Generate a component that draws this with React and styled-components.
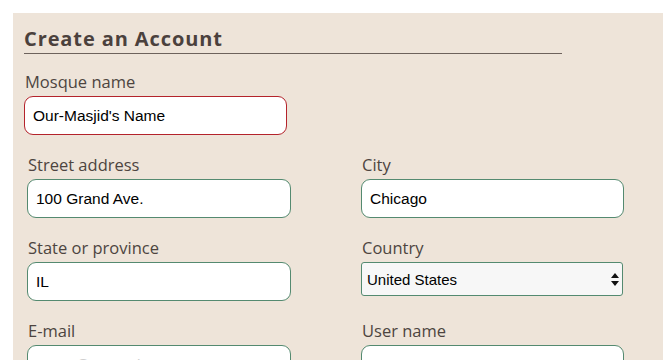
import React from 'react'
import styled, { createGlobalStyle } from 'styled-components'

const GlobalStyle = createGlobalStyle`
  html, body {
    margin: 0;
    background: #ffffff;
  }
  body {
    padding: 13px 0 0 13px;
    overflow: hidden;
  }
`

const Panel = styled.div`
  background: #eee4d9;
  padding: 14px 11px 40px 11px;
  min-height: 400px;
`

const Title = styled.h2`
  margin: 0;
  width: 538px;
  padding-bottom: 2px;
  border-bottom: 1px solid #6d625c;
  font-family: 'Open Sans', sans-serif;
  font-weight: 700;
  font-size: 20px;
  line-height: 24px;
  color: #4b413d;
  letter-spacing: 0.9px;
`

const Field = styled.div`
  display: flex;
  flex-direction: column;
  width: ${p => p.width || 264}px;
  margin-top: ${p => p.top || 0}px;
`

const Label = styled.label`
  font-family: 'Open Sans', sans-serif;
  font-size: 16.5px;
  line-height: 22px;
  color: #4d4440;
  padding-left: 1px;
  margin-bottom: 3px;
`

const Input = styled.input`
  box-sizing: border-box;
  width: 100%;
  height: 39px;
  padding: 0 8px;
  border: 1.5px solid ${p => (p.invalid ? '#b4232b' : '#548a70')};
  border-radius: 9px;
  background: #ffffff;
  font-family: 'Liberation Sans', Arial, sans-serif;
  font-size: 15.5px;
  color: #000;
  outline: none;

  &::placeholder {
    color: #cfcfcf;
  }
`

const SelectWrap = styled.div`
  position: relative;
  width: 100%;
`

const Select = styled.select`
  box-sizing: border-box;
  width: 100%;
  height: 34px;
  padding: 0 24px 0 5px;
  border: 1.5px solid #548a70;
  border-radius: 3px;
  background: #f7f7f7;
  appearance: none;
  font-family: 'Liberation Sans', Arial, sans-serif;
  font-size: 15px;
  color: #000;
  outline: none;
`

const Arrows = styled.svg`
  position: absolute;
  right: 4px;
  top: 11px;
  pointer-events: none;
`

const Grid = styled.div`
  display: grid;
  grid-template-columns: 264px 263px;
  column-gap: 70px;
  row-gap: 19px;
  padding-left: 3px;
  margin-top: 19px;
  align-items: start;
`

export default () => {
  return (
    <>
      <GlobalStyle />
      <Panel>
        <Title>Create an Account</Title>
        <Field top={17} width={263}>
          <Label>Mosque name</Label>
          <Input invalid defaultValue="Our-Masjid's Name" />
        </Field>
        <Grid>
          <Field>
            <Label>Street address</Label>
            <Input defaultValue="100 Grand Ave." />
          </Field>
          <Field width={263}>
            <Label>City</Label>
            <Input defaultValue="Chicago" />
          </Field>
          <Field>
            <Label>State or province</Label>
            <Input defaultValue="IL" />
          </Field>
          <Field width={262}>
            <Label>Country</Label>
            <SelectWrap>
              <Select defaultValue="US">
                <option value="US">United States</option>
                <option value="CA">Canada</option>
              </Select>
              <Arrows width="8" height="13" viewBox="0 0 8 13">
                <path d="M4 0 L8 5 L0 5 Z M0 8 L8 8 L4 13 Z" fill="#111" />
              </Arrows>
            </SelectWrap>
          </Field>
          <Field>
            <Label>E-mail</Label>
            <Input placeholder="name@example.com" />
          </Field>
          <Field width={263}>
            <Label>User name</Label>
            <Input placeholder="username" />
          </Field>
        </Grid>
      </Panel>
    </>
  )
}
